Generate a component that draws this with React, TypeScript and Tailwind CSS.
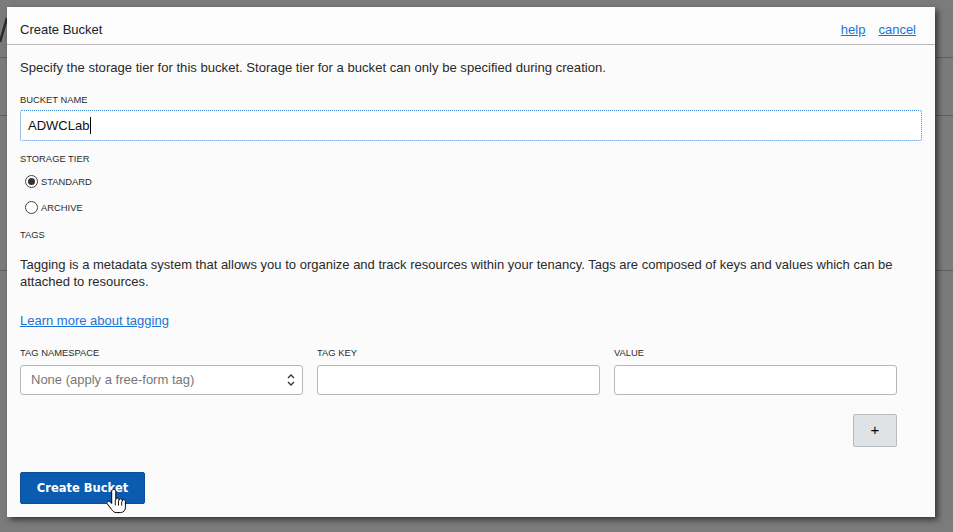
import React from "react";

const sans = { fontFamily: '"Liberation Sans", Arial, sans-serif' };

function Label({ children, className = "" }: { children: React.ReactNode; className?: string }) {
  return (
    <div className={"text-[9.4px] leading-[12px] text-[#2b2b2b] uppercase " + className} style={sans}>
      {children}
    </div>
  );
}

function Radio({ checked, label, className = "" }: { checked?: boolean; label: string; className?: string }) {
  return (
    <div className={"flex items-center h-[20px] pl-[5px] " + className}>
      <span className="w-[13px] h-[13px] rounded-full border border-[#444] bg-white flex items-center justify-center">
        {checked && <span className="w-[7px] h-[7px] rounded-full bg-[#333]" />}
      </span>
      <span className="ml-[3px] mt-[3px] text-[9.4px] text-[#2b2b2b]" style={sans}>
        {label}
      </span>
    </div>
  );
}

function HandCursor() {
  return (
    <svg width="20" height="30" viewBox="0 0 20 30" className="absolute left-[107px] top-[488px]">
      <path
        d="M6.5 1.5c-1 0-1.8.8-1.8 1.8v12.2l-1.6-1.7c-.7-.8-1.9-.9-2.6-.2-.7.6-.7 1.7-.1 2.4l4.3 5.6c1.2 1.6 2.6 3 4.5 3h4.3c2.7 0 4.9-2.3 4.9-5v-6.3c0-.9-.7-1.6-1.6-1.6s-1.6.7-1.6 1.6v-.9c0-.9-.7-1.6-1.6-1.6s-1.6.7-1.6 1.6v-.7c0-.9-.7-1.6-1.6-1.6s-1.6.7-1.6 1.6V3.3c0-1-.8-1.8-1.8-1.8z"
        fill="#fff"
        stroke="#000"
        strokeWidth="1"
      />
      <path d="M8.3 12v5.5M11.5 12.6v5M14.7 13.6v4" stroke="#000" strokeWidth="0.9" />
    </svg>
  );
}

export default function App() {
  return (
    <div className="relative w-[953px] h-[532px] bg-[#7b7b7b] overflow-hidden" style={sans}>
      {/* page behind the modal */}
      <div className="absolute left-0 right-0 top-[57px] h-px bg-[#5e5e5e]" />
      <div className="absolute left-0 right-0 top-[115px] h-px bg-[#5e5e5e]" />
      <div className="absolute left-0 right-0 top-[270px] h-px bg-[#5e5e5e]" />
      <svg className="absolute left-0 top-[16px]" width="8" height="28">
        <line x1="7" y1="2" x2="0" y2="26" stroke="#2a2a2a" strokeWidth="2.5" />
      </svg>

      {/* modal */}
      <div className="absolute left-[7px] top-[7px] w-[928px] h-[510px] bg-[#fbfbfb] shadow-[3px_3px_6px_rgba(0,0,0,0.55)] flex flex-col">
        <div className="h-[38px] flex items-end justify-between px-[13px] pb-[6px] border-b border-[#b9b9b9] bg-[#fcfcfc]">
          <div className="text-[13px] leading-[17px] text-[#222]">Create Bucket</div>
          <div className="flex gap-[13px] text-[13px] leading-[17px] text-[#1a73d9] pr-[6px]">
            <span className="underline">help</span>
            <span className="underline">cancel</span>
          </div>
        </div>

        <div className="flex flex-col px-[13px] pt-[14px]">
          <div className="text-[13.1px] leading-[17px] text-[#2a2a2a]">
            Specify the storage tier for this bucket. Storage tier for a bucket can only be specified during creation.
          </div>

          <Label className="mt-[18px]">Bucket Name</Label>
          <div className="mt-[4px] h-[31px] w-[902px] bg-white border border-dotted border-[#3f86d6] rounded-[2px] flex items-center pl-[7px]">
            <span className="text-[13px] text-[#111]">ADWCLab</span>
            <span className="w-px h-[17px] bg-black ml-[1px]" />
          </div>

          <Label className="mt-[12px]">Storage Tier</Label>
          <Radio checked label="STANDARD" className="mt-[6px]" />
          <Radio label="ARCHIVE" className="mt-[6px]" />

          <Label className="mt-[12px]">Tags</Label>
          <div className="mt-[15px] text-[13px] leading-[17px] text-[#2a2a2a] w-[902px]">
            Tagging is a metadata system that allows you to organize and track resources within your tenancy. Tags are composed of keys and values which can be attached to resources.
          </div>
          <div className="mt-[22px] text-[13px] leading-[17px] text-[#1a73d9] underline">Learn more about tagging</div>

          <div className="w-[877px] flex flex-col mt-[18px]">
            <div className="grid grid-cols-[283px_283px_283px] gap-x-[14px]">
              <Label>Tag Namespace</Label>
              <Label>Tag Key</Label>
              <Label>Value</Label>
              <div className="mt-[6px] h-[30px] bg-white border border-[#b7b7b7] rounded-[3px] flex items-center justify-between pl-[10px] pr-[6px]">
                <span className="text-[13px] text-[#777]">None (apply a free-form tag)</span>
                <svg width="10" height="14" viewBox="0 0 10 14">
                  <path d="M2 5l3-3 3 3M2 9l3 3 3-3" fill="none" stroke="#333" strokeWidth="1.3" />
                </svg>
              </div>
              <div className="mt-[6px] h-[30px] bg-white border border-[#b7b7b7] rounded-[3px]" />
              <div className="mt-[6px] h-[30px] bg-white border border-[#b7b7b7] rounded-[3px]" />
            </div>
            <div className="self-end mt-[19px] w-[44px] h-[33px] bg-[#dfe3e6] border border-[#b5bcc2] rounded-[2px] flex items-center justify-center text-[15px] text-black">
              +
            </div>
          </div>

          <div
            className="mt-[25px] w-[125px] h-[32px] pt-[2px] bg-[#0b5cb0] border border-[#0a4f99] rounded-[2px] flex items-center justify-center text-white font-bold text-[11.5px]"
            style={{ fontFamily: '"DejaVu Sans", Verdana, sans-serif' }}
          >
            Create Bucket
          </div>
        </div>
      </div>

      <HandCursor />
    </div>
  );
}
